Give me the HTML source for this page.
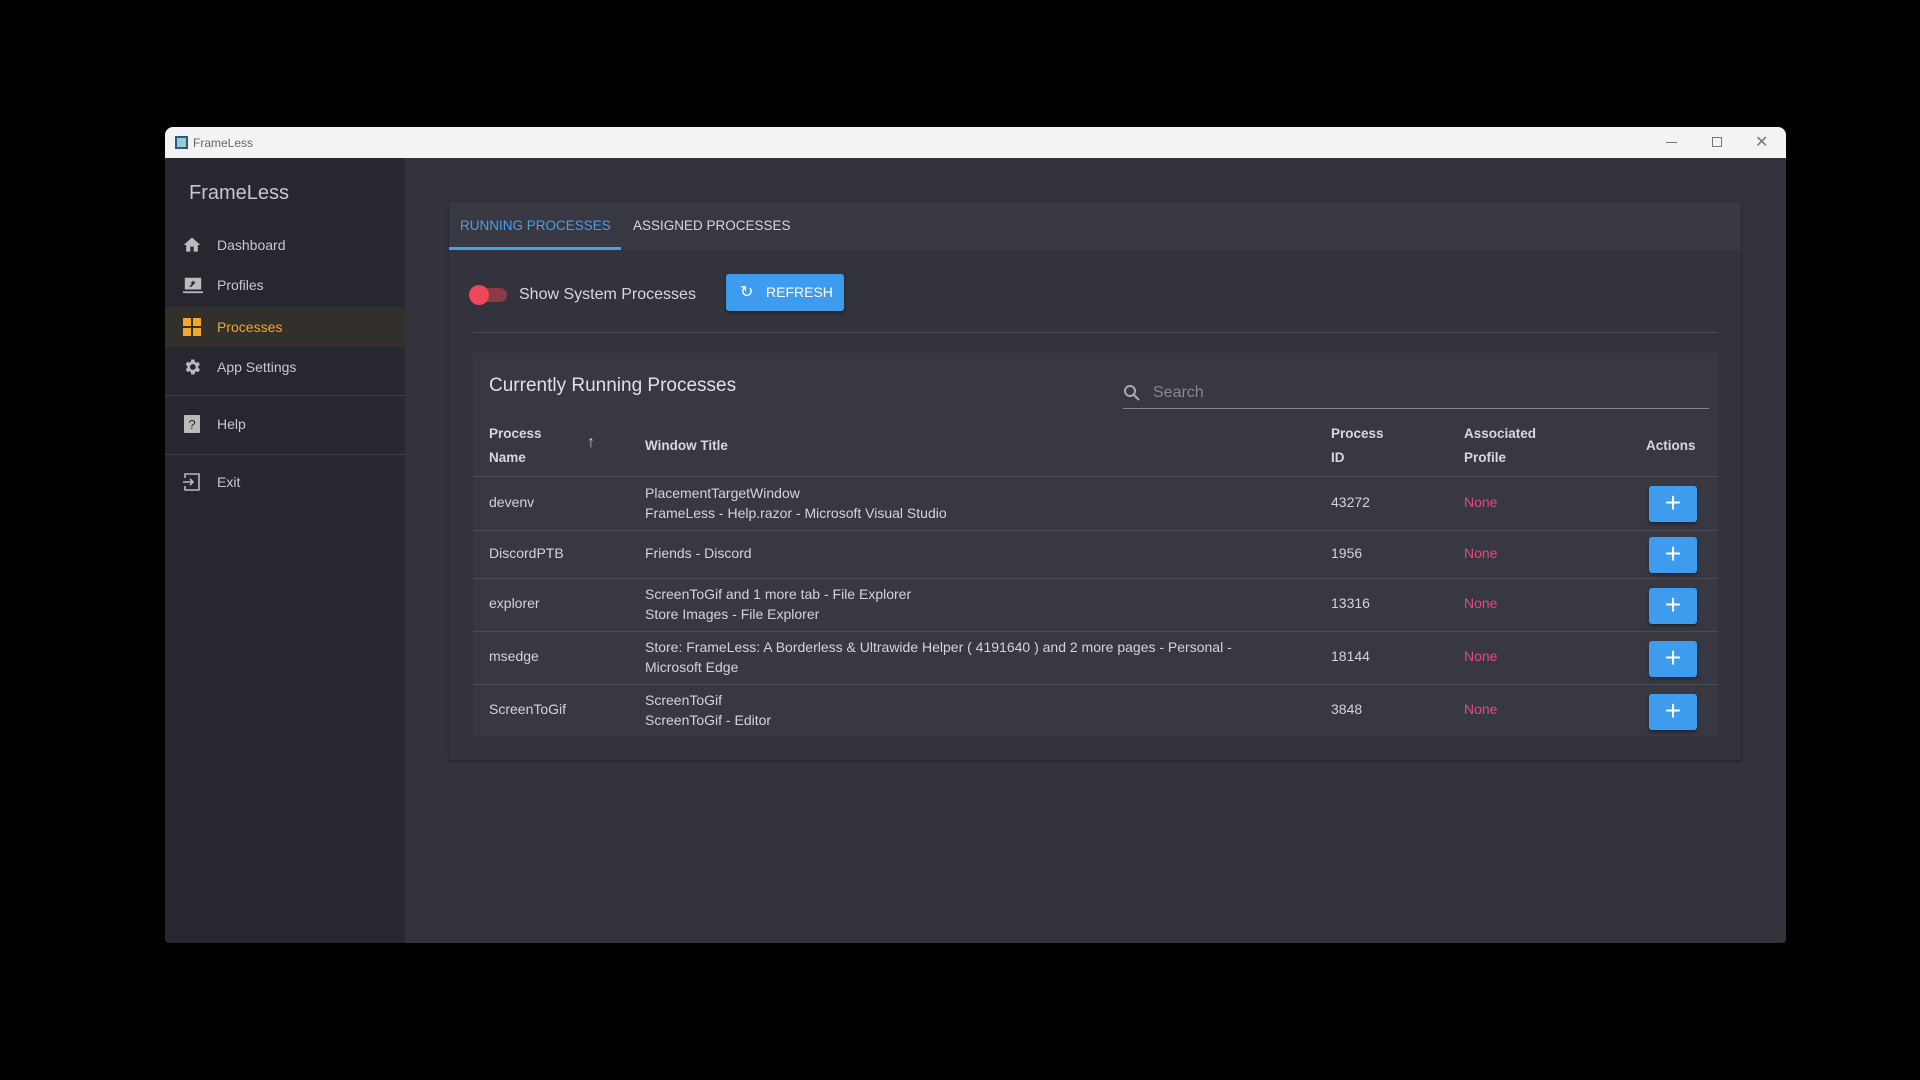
<!DOCTYPE html>
<html><head><meta charset="utf-8"><style>
*{box-sizing:border-box;margin:0;padding:0}
body{width:1920px;height:1080px;background:#000;font-family:"Liberation Sans",sans-serif;position:relative;overflow:hidden;color:#d4d4d8}
.win{position:absolute;left:165px;top:127px;width:1621px;height:816px;background:#32333d;border-radius:8px 8px 4px 4px;overflow:hidden}
.tb{height:31px;background:#f3f3f3;position:relative;color:#666;font-size:12px}
.tb .t{position:absolute;left:28px;top:9px}
.tb .ic{position:absolute;left:10px;top:9px;width:13px;height:13px;border:2px solid #2a5a8a;background:#9cc}
.side{position:absolute;left:0;top:31px;width:240px;bottom:0;background:#26272f}
.side h1{position:absolute;left:24px;top:24px;font-size:20px;font-weight:normal;color:#c8c8cc}
.nav{position:absolute;left:0;width:240px;height:40px;font-size:14px;color:#c8c8cc}
.nav span{position:absolute;left:52px;top:12px}
.nav svg{position:absolute;left:17px;top:10px}
.sel{background:#33302b;color:#f6a823}
.hr{position:absolute;left:0;width:240px;height:1px;background:#3e3f48}
.panel{position:absolute;left:284px;top:75px;width:1292px;height:558px;background:#32333d;box-shadow:0 1px 3px rgba(0,0,0,.4)}
.tabs{height:48px;background:#373842;position:relative;font-size:13.5px}
.tab{position:absolute;top:16px}
.ul{position:absolute;left:0;top:45px;width:172px;height:3px;background:#4a9ee8}
.card{position:absolute;left:24px;top:151px;width:1245px;height:383px;background:#373842;font-size:14px}
.c{position:absolute}
.b{font-weight:bold;font-size:13.5px;color:#d8d8dc;line-height:24px}
.line{position:absolute;left:0;width:1245px;height:1px;background:#4a4b55}
.btn{position:absolute;left:1176px;width:48px;height:36px;background:#3d9ced;border-radius:3px;box-shadow:0 2px 3px rgba(0,0,0,.4);color:#fff;font-size:28px;text-align:center;line-height:34px;font-weight:300}
.none{color:#e64a78}
</style></head><body>
<div class="win">
 <div class="tb"><div class="ic"></div><div class="t">FrameLess</div>
  <div style="position:absolute;left:1501px;top:15px;width:11px;height:1px;background:#777"></div>
  <div style="position:absolute;left:1547px;top:10px;width:10px;height:10px;border:1px solid #777"></div>
  <div style="position:absolute;left:1590px;top:5px;font-size:16px;color:#777">✕</div>
 </div>
 <div class="side">
  <h1>FrameLess</h1>
  <div class="nav" style="top:67px"><svg width="20" height="20" viewBox="0 0 24 24"><path fill="#bbb" d="M10 20v-6h4v6h5v-8h3L12 3 2 12h3v8z"/></svg><span>Dashboard</span></div>
  <div class="nav" style="top:107px"><svg width="22" height="20" viewBox="0 0 24 22"><path fill="#bbb" d="M3 3h18v13H3z"/><path fill="#bbb" d="M1 18h22v2H1z"/><path fill="#26272f" d="M8 13l3-4h-2l4-3v2h2l-5 5z"/></svg><span>Profiles</span></div>
  <div class="nav sel" style="top:149px"><svg width="20" height="20" viewBox="0 0 20 20"><rect x="1" y="1" width="8" height="8" fill="#f6a823"/><rect x="11" y="1" width="8" height="8" fill="#f6a823"/><rect x="1" y="11" width="8" height="8" fill="#f6a823"/><rect x="11" y="11" width="8" height="8" fill="#f6a823"/></svg><span>Processes</span></div>
  <div class="nav" style="top:189px"><svg width="20" height="20" viewBox="0 0 24 24"><path fill="#bbb" d="M19.4 13a7.5 7.5 0 000-2l2.1-1.6-2-3.5-2.5 1a7 7 0 00-1.7-1L15 3h-4l-.4 2.7a7 7 0 00-1.7 1l-2.5-1-2 3.5L6.6 11a7.5 7.5 0 000 2l-2.1 1.6 2 3.5 2.5-1a7 7 0 001.7 1L11 21h4l.4-2.7a7 7 0 001.7-1l2.5 1 2-3.5zM13 15.5a3.5 3.5 0 110-7 3.5 3.5 0 010 7z"/></svg><span>App Settings</span></div>
  <div class="hr" style="top:237px"></div>
  <div class="nav" style="top:246px"><svg width="20" height="20" viewBox="0 0 20 20"><rect x="2" y="1" width="16" height="18" rx="1" fill="#bbb"/><text x="10" y="15" font-size="13" text-anchor="middle" fill="#26272f" font-family="Liberation Sans">?</text></svg><span>Help</span></div>
  <div class="hr" style="top:296px"></div>
  <div class="nav" style="top:304px"><svg width="20" height="20" viewBox="0 0 20 20" fill="none" stroke="#bbb" stroke-width="1.6"><path d="M3 6V2h14v16H3v-4"/><path d="M1 10h10M8 7l3 3-3 3"/></svg><span>Exit</span></div>
 </div>
 <div class="panel">
  <div class="tabs"><div class="tab" style="left:11px;color:#4a9ee8">RUNNING PROCESSES</div><div class="tab" style="left:184px;color:#d8d8dc">ASSIGNED PROCESSES</div><div class="ul"></div></div>
  <div style="position:absolute;left:22px;top:86px;width:36px;height:14px;border-radius:7px;background:#8a3a48"></div>
  <div style="position:absolute;left:20px;top:83px;width:20px;height:20px;border-radius:10px;background:#f0465a"></div>
  <div style="position:absolute;left:70px;top:84px;font-size:16px;color:#d8d8dc">Show System Processes</div>
  <div style="position:absolute;left:277px;top:72px;width:118px;height:37px;background:#3d9ced;border-radius:3px;color:#fff;font-size:14px;line-height:37px;box-shadow:0 2px 3px rgba(0,0,0,.4)"><span style="position:absolute;left:14px;font-size:16px">↻</span><span style="position:absolute;left:40px">REFRESH</span></div>
  <div style="position:absolute;left:24px;top:130px;width:1245px;height:1px;background:#4a4b55"></div>
  <div class="card">
   <div class="c" style="left:16px;top:22px;font-size:19px;color:#e0e0e4">Currently Running Processes</div>
   <div class="c" style="left:650px;top:31px"><svg width="18" height="18" viewBox="0 0 18 18" fill="none" stroke="#aaa" stroke-width="2"><circle cx="7" cy="7" r="5"/><path d="M11 11l5 5"/></svg></div>
   <div class="c" style="left:680px;top:31px;font-size:16px;color:#888">Search</div>
   <div class="c" style="left:650px;top:55px;width:586px;height:1px;background:#888"></div>
   <div class="c b" style="left:16px;top:69px">Process<br>Name</div>
   <div class="c" style="left:114px;top:81px;font-size:16px;color:#ccc">↑</div>
   <div class="c b" style="left:172px;top:81px">Window Title</div>
   <div class="c b" style="left:858px;top:69px">Process<br>ID</div>
   <div class="c b" style="left:991px;top:69px">Associated<br>Profile</div>
   <div class="c b" style="left:1173px;top:81px">Actions</div>
   <div class="line" style="top:123px"></div>
   <div class="c" style="left:16px;top:141px">devenv</div>
   <div class="c" style="left:172px;top:130px;line-height:20px">PlacementTargetWindow<br>FrameLess - Help.razor - Microsoft Visual Studio</div>
   <div class="c" style="left:858px;top:141px">43272</div><div class="c none" style="left:991px;top:141px">None</div>
   <div class="btn" style="top:133px">+</div>
   <div class="line" style="top:177px"></div>
   <div class="c" style="left:16px;top:192px">DiscordPTB</div>
   <div class="c" style="left:172px;top:192px">Friends - Discord</div>
   <div class="c" style="left:858px;top:192px">1956</div><div class="c none" style="left:991px;top:192px">None</div>
   <div class="btn" style="top:184px">+</div>
   <div class="line" style="top:225px"></div>
   <div class="c" style="left:16px;top:242px">explorer</div>
   <div class="c" style="left:172px;top:231px;line-height:20px">ScreenToGif and 1 more tab - File Explorer<br>Store Images - File Explorer</div>
   <div class="c" style="left:858px;top:242px">13316</div><div class="c none" style="left:991px;top:242px">None</div>
   <div class="btn" style="top:235px">+</div>
   <div class="line" style="top:278px"></div>
   <div class="c" style="left:16px;top:295px">msedge</div>
   <div class="c" style="left:172px;top:284px;line-height:20px">Store: FrameLess: A Borderless &amp; Ultrawide Helper ( 4191640 ) and 2 more pages - Personal -<br>Microsoft Edge</div>
   <div class="c" style="left:858px;top:295px">18144</div><div class="c none" style="left:991px;top:295px">None</div>
   <div class="btn" style="top:288px">+</div>
   <div class="line" style="top:331px"></div>
   <div class="c" style="left:16px;top:348px">ScreenToGif</div>
   <div class="c" style="left:172px;top:337px;line-height:20px">ScreenToGif<br>ScreenToGif - Editor</div>
   <div class="c" style="left:858px;top:348px">3848</div><div class="c none" style="left:991px;top:348px">None</div>
   <div class="btn" style="top:341px">+</div>
  </div>
 </div>
</div>
</body></html>
